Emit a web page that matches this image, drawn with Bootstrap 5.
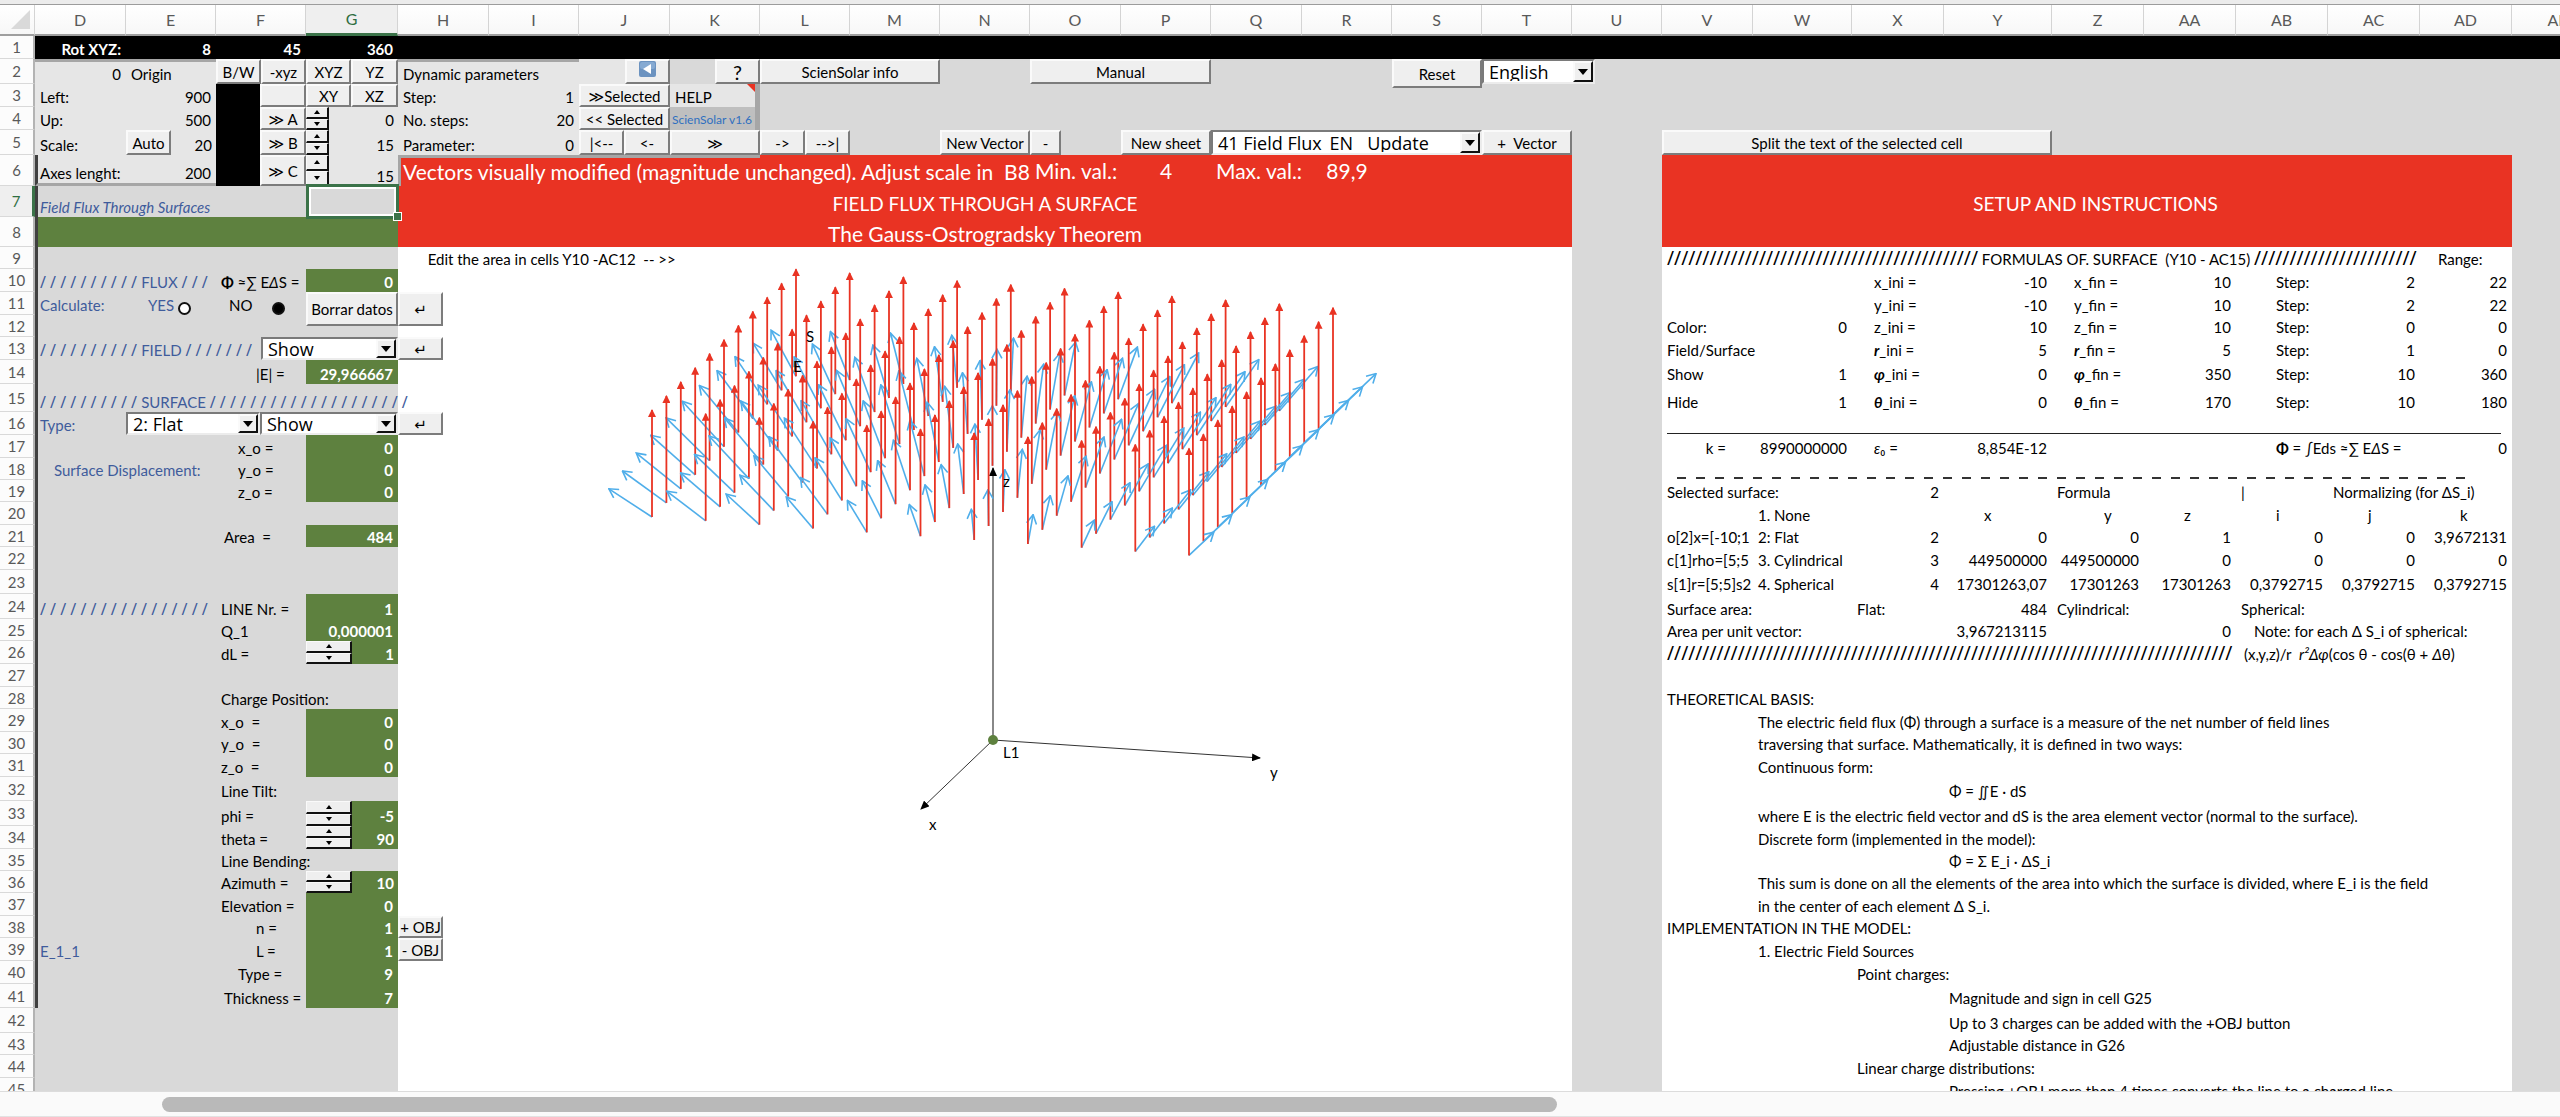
<!DOCTYPE html>
<html lang="en">
<head>
<meta charset="utf-8">
<meta name="viewport" content="width=device-width, initial-scale=1">
<title>ScienSolar - Field Flux</title>
<link href="https://cdn.jsdelivr.net/npm/bootstrap@5.3.0/dist/css/bootstrap.min.css" rel="stylesheet">
<style>
  :root { --red:#e93323; --green:#5e813f; --sel:#3b7349; --ink:#3f5c9c; --grey:#d9d9d9; --panel:#e6e6e6; --shade:#a6a6a6; }
  body { font-family: Lato, "Noto Sans", "DejaVu Sans", sans-serif; font-size: 15px; line-height: 20px; color:#000; background:#fff; }
  .top-strip { height: 5px; background:#ececec; border-bottom:1px solid #9c9c9c; }
  .sheet { table-layout: fixed; width: 2604px; border-collapse: separate; border-spacing: 0; }
  .c35{width:35px}.c90{width:90px}.c91{width:91px}.c92{width:92px}.c93{width:93px}.c99{width:99px}.c108{width:108px}
  .on-grey { background: var(--grey); }
  .on-white { background:#fff; }
  .sheet tr { --h:23px; height: var(--h); }
  .sheet tr.h22{--h:22px}.sheet tr.h24{--h:24px}.sheet tr.h25{--h:25px}.sheet tr.h28{--h:28px}.sheet tr.h30{--h:30px}.sheet tr.h31{--h:31px}
  .sheet td { padding: 0 5px; vertical-align: bottom; white-space: pre; overflow: visible; }
  .sheet thead th, .sheet tbody th { padding:0; font-weight:400; text-align:center; vertical-align: middle; color:#595959; background: linear-gradient(#fff,#f7f7f7); }
  .sheet thead th { border-right:1px solid #d4d4d4; border-bottom:2px solid #9f9f9f; font-size:16px; }
  .sheet tbody th { background:#fcfcfc; border-bottom:1px solid #d9d9d9; border-right:2px solid #b3b3b3; font-size:15px; }
  .sheet thead th.picked { background:#efefef; color:#2f6e42; border-bottom:3px solid var(--sel); }
  .sheet tbody th.picked { color:#2f6e42; border-right:3px solid var(--sel); background:#efefef; }
  .corner-mark { width:19px; height:19px; margin-left:11px; background:#d9d9d9; clip-path: polygon(100% 0,100% 100%,0 100%); }
  .sheet tr.band-grey > td { background: var(--grey); }
  .sheet tr.band-black > td { background:#000; color:#fff; font-weight:700; }
  .sheet tr > td.pane { background: var(--panel); }
  .sheet tr > td.pane-dark { background:#bfbfbf; font-size:12px; color:#2f6fc0; padding:0 2px; }
  .sheet td.shade-top { border-top:3px solid var(--shade); }
  .sheet td.shade-bottom { border-bottom:3px solid var(--shade); }
  .sheet td.shade-right { border-right:5px solid var(--shade); }
  .sheet td.shade-left { border-left:3px solid var(--shade); padding-left:2px; }
  .sheet td.edge { border-left:3px solid #404040; padding-left:2px; }
  .num { text-align:right; }
  .sheet td.grn { background: var(--green); color:#fff; font-weight:700; text-align:right; }
  .sheet td.red { background: var(--red); color:#fff; font-size:21px; line-height:26px; text-align:center; }
  .sheet td.red-mid { vertical-align: middle; }
  .sheet td.red-title { font-size:19px; }
  .sheet td.blu { color: var(--ink); }
  .sheet td.flush { padding:0; vertical-align: top; }
  .sheet td.in8{padding-left:8px}.sheet td.in18{padding-left:18px}.sheet td.in22{padding-left:22px}.sheet td.in40{padding-left:40px}.sheet td.in52{padding-left:52px}
  .sheet td.cut { overflow:hidden; }
  .sheet .btn { --bs-btn-padding-x:0; --bs-btn-padding-y:0; --bs-btn-font-size:15px; --bs-btn-line-height:18px; --bs-btn-border-radius:0; --bs-btn-color:#000; --bs-btn-bg:#efefef; --bs-btn-hover-bg:#f6f6f6; --bs-btn-hover-color:#000;
    height: var(--h); border:2px solid; border-color:#fafafa #7c7c7c #7c7c7c #fafafa; white-space:nowrap; overflow:hidden; flex:none; }
  .sheet td.flush > .btn { display:block; }
  .w-half { width:45px; } .w-spin { width:23px; } .w-wspin { width:46px; } .w-dash { width:31px; } .w-type { width:134px; } .w-lang { width:113px; }
  .ink-black { background:#000; width:44px; height:var(--h); }
  .tall-4 { margin-bottom:-4px; }
  .sheet .btn.tall { height:29px; }
  .sheet .btn.two-rows { height:34px; }
  .combo { height: var(--h); background:#fff; border:2px solid; border-color:#7a7a7a #ececec #ececec #7a7a7a; }
  .combo select { appearance:none; border:0; background:transparent; font-family:"Open Sans","Noto Sans",sans-serif; font-size:18px; line-height:18px; padding:0 0 0 5px; min-width:0; color:#000; outline:0; }
  .combo .drop { width:20px; background:#efefef; border:2px solid; border-color:#fafafa #111 #111 #fafafa; flex:none; }
  .tri-d, .tri-u { display:block; width:0; height:0; border:5px solid transparent; }
  .tri-d { border-top:6px solid #000; border-bottom:0; } .tri-u { border-bottom:6px solid #000; border-top:0; }
  .spin { height: var(--h); }
  .sheet .spin .btn { height:auto; flex:1 1 0; min-height:0; border-color:#fafafa #111 #111 #fafafa; border-width:1px 2px 2px 1px; }
  .spin .tri-d { border-width:4px 3px 0; } .spin .tri-u { border-width:0 3px 4px; }
  .dot { appearance:none; width:13px; height:13px; border:2px solid #111; border-radius:50%; background:#fff; margin:0; }
  .dot:checked { background:#000; }
  .hatch { font-family:"Noto Sans",sans-serif; font-size:16px; }
  .hatch-tight { font-family:"Noto Sans",sans-serif; font-size:19px; }
  .cell-cursor { position:absolute; inset:-2px -1px -2px 0; border:3px solid var(--sel); outline:2px solid #fff; outline-offset:-5px; z-index:2; }
  .cell-cursor::after { content:""; position:absolute; right:-6px; bottom:-5px; width:9px; height:9px; background:var(--sel); border:1px solid #fff; }
  .note-flag { position:absolute; right:0; top:0; border:4px solid transparent; border-top-color:#e93323; border-right-color:#e93323; }
  .rule-line { border-bottom:1px solid #222; margin:0 6px 1px 0; }
  .rule-dash { height:2px; margin:0 36px 1px 10px; background: repeating-linear-gradient(90deg,#333 0 9px,transparent 9px 19px); }
  .plot { position:absolute; left:0; top:0; width:1173px; height:844px; pointer-events:none; overflow:visible; }
  .plot text { font-size:15px; fill:#000; }
  .scroll-track { height:26px; background:#fafafa; border-top:1px solid #dcdcdc; border-bottom:1px solid #e2e2e2; }
  .scroll-thumb { width:54.5%; height:15px; margin-left:6.33%; background:#b9b9b9; border-radius:8px; }
</style>
<script src="https://cdn.jsdelivr.net/npm/bootstrap@5.3.0/dist/js/bootstrap.bundle.min.js"></script>
</head>
<body class="d-flex flex-column vh-100 overflow-hidden">
<div class="top-strip flex-shrink-0"></div>
<main class="flex-grow-1 overflow-hidden">
<table class="sheet">
<colgroup><col class="c35"></colgroup>
<colgroup class="on-grey"><col class="c91"><col class="c90"><col class="c90"><col class="c92"></colgroup>
<colgroup class="on-white"><col class="c91"><col class="c90"><col class="c91"><col class="c90"><col class="c90"><col class="c90"><col class="c90"><col class="c91"><col class="c90"><col class="c91"><col class="c90"><col class="c90"><col class="c90"></colgroup>
<colgroup class="on-grey"><col class="c90"></colgroup>
<colgroup class="on-white"><col class="c91"><col class="c99"><col class="c92"><col class="c108"><col class="c92"><col class="c92"><col class="c92"><col class="c92"><col class="c92"></colgroup>
<colgroup class="on-grey"><col class="c92"></colgroup>
<thead><tr class="h31"><th><div class="corner-mark"></div></th><th>D</th><th>E</th><th>F</th><th class="picked">G</th><th>H</th><th>I</th><th>J</th><th>K</th><th>L</th><th>M</th><th>N</th><th>O</th><th>P</th><th>Q</th><th>R</th><th>S</th><th>T</th><th>U</th><th>V</th><th>W</th><th>X</th><th>Y</th><th>Z</th><th>AA</th><th>AB</th><th>AC</th><th>AD</th><th>AE</th></tr></thead>
<tbody>
<tr class="band-black"><th>1</th><td class="num">Rot XYZ:</td><td class="num">8</td><td class="num">45</td><td class="num">360</td><td colspan="24"></td></tr>
<tr class="h25 band-grey"><th>2</th><td class="pane shade-top num">0</td><td class="pane shade-top">Origin</td>
<td class="flush"><div class="d-flex"><button class="btn w-half">B/W</button><button class="btn w-half">-xyz</button></div></td>
<td class="flush"><div class="d-flex"><button class="btn w-half">XYZ</button><button class="btn flex-grow-1">YZ</button></div></td>
<td class="pane shade-top" colspan="2">Dynamic parameters</td>
<td class="pane flush"><div class="d-flex justify-content-end"><button class="btn w-half d-flex justify-content-center" aria-label="Back"><svg width="17" height="16" viewBox="0 0 17 16"><rect width="17" height="16" rx="2" fill="#6c93c0"/><rect x="1" y="1" width="15" height="7" rx="2" fill="#86aad2"/><path d="M12 3v10L4 8z" fill="#fff"/></svg></button></div></td>
<td class="flush"><div class="d-flex justify-content-end"><button class="btn w-half fs-5">?</button></div></td>
<td class="flush" colspan="2"><button class="btn w-100">ScienSolar info</button></td><td></td>
<td class="flush" colspan="2"><button class="btn w-100">Manual</button></td><td colspan="2"></td>
<td class="flush"><div class="tall-4"><button class="btn tall w-100">Reset</button></div></td>
<td class="flush" colspan="2"><div class="d-flex"><div class="combo w-lang d-flex"><select class="flex-grow-1" aria-label="Language"><option>English</option></select><span class="drop d-flex align-items-center justify-content-center"><i class="tri-d"></i></span></div></div></td>
<td colspan="10"></td></tr>
<tr class="band-grey"><th>3</th><td class="pane">Left:</td><td class="pane num">900</td>
<td class="flush"><div class="d-flex"><span class="ink-black"></span><button class="btn flex-grow-1" aria-label="Blank"></button></div></td>
<td class="flush"><div class="d-flex"><button class="btn w-half">XY</button><button class="btn flex-grow-1">XZ</button></div></td>
<td class="pane">Step:</td><td class="pane num">1</td><td class="flush"><button class="btn w-100">≫Selected</button></td>
<td class="pane shade-right position-relative">HELP<span class="note-flag"></span></td><td colspan="20"></td></tr>
<tr class="band-grey"><th>4</th><td class="pane">Up:</td><td class="pane num">500</td>
<td class="flush"><div class="d-flex"><span class="ink-black"></span><button class="btn flex-grow-1">≫ A</button></div></td>
<td class="pane flush"><div class="d-flex justify-content-between align-items-end pe-1"><div class="spin w-spin d-flex flex-column"><button class="btn d-flex align-items-center justify-content-center" aria-label="A up"><i class="tri-u"></i></button><button class="btn d-flex align-items-center justify-content-center" aria-label="A down"><i class="tri-d"></i></button></div><span>0</span></div></td>
<td class="pane">No. steps:</td><td class="pane num">20</td><td class="flush"><button class="btn w-100">&lt;&lt; Selected</button></td>
<td class="pane-dark shade-right">ScienSolar v1.6</td><td colspan="20"></td></tr>
<tr class="h25 band-grey"><th>5</th><td class="pane">Scale:</td>
<td class="pane flush"><div class="d-flex justify-content-between align-items-end pe-1"><button class="btn w-half">Auto</button><span>20</span></div></td>
<td class="flush"><div class="d-flex"><span class="ink-black"></span><button class="btn flex-grow-1">≫ B</button></div></td>
<td class="pane flush"><div class="d-flex justify-content-between align-items-end pe-1"><div class="spin w-spin d-flex flex-column"><button class="btn d-flex align-items-center justify-content-center" aria-label="B up"><i class="tri-u"></i></button><button class="btn d-flex align-items-center justify-content-center" aria-label="B down"><i class="tri-d"></i></button></div><span>15</span></div></td>
<td class="pane">Parameter:</td><td class="pane num">0</td>
<td class="flush"><div class="d-flex"><button class="btn w-half">|&lt;--</button><button class="btn flex-grow-1">&lt;-</button></div></td>
<td class="flush"><button class="btn w-100">≫</button></td>
<td class="flush"><div class="d-flex"><button class="btn w-half">-&gt;</button><button class="btn flex-grow-1">--&gt;|</button></div></td><td></td>
<td class="flush"><button class="btn w-100">New Vector</button></td><td class="flush"><button class="btn w-dash">-</button></td>
<td class="flush"><button class="btn w-100">New sheet</button></td>
<td class="flush" colspan="3"><div class="combo d-flex"><select class="flex-grow-1" aria-label="Sheet"><option>41 Field Flux_EN &nbsp; Update</option></select><span class="drop d-flex align-items-center justify-content-center"><i class="tri-d"></i></span></div></td>
<td class="flush"><button class="btn w-100">+ &nbsp;Vector</button></td><td></td>
<td class="flush" colspan="4"><button class="btn w-100">Split the text of the selected cell</button></td><td colspan="6"></td></tr>
<tr class="h31"><th>6</th><td class="pane edge shade-bottom">Axes lenght:</td><td class="pane num shade-bottom">200</td>
<td class="flush"><div class="d-flex"><span class="ink-black"></span><button class="btn flex-grow-1">≫ C</button></div></td>
<td class="pane flush"><div class="d-flex justify-content-between align-items-end pe-1"><div class="spin w-spin d-flex flex-column"><button class="btn d-flex align-items-center justify-content-center" aria-label="C up"><i class="tri-u"></i></button><button class="btn d-flex align-items-center justify-content-center" aria-label="C down"><i class="tri-d"></i></button></div><span>15</span></div></td>
<td class="red red-mid text-start shade-top shade-left" colspan="4">Vectors visually modified (magnitude unchanged). Adjust scale in  B8</td><td class="red" colspan="3"></td><td class="red red-mid text-start">Min. val.:</td><td class="red red-mid">4</td><td class="red red-mid text-start">Max. val.:</td><td class="red red-mid">89,9</td><td class="red" colspan="2"></td>
<td></td><td class="red" colspan="9"></td><td></td></tr>
<tr class="h31"><th class="picked">7</th><td class="edge blu fst-italic" colspan="3">Field Flux Through Surfaces</td><td class="position-relative"><span class="cell-cursor"></span></td>
<td class="red red-title" colspan="13">FIELD FLUX THROUGH A SURFACE</td><td></td><td class="red red-title in22" colspan="9">SETUP AND INSTRUCTIONS</td><td></td></tr>
<tr class="h30"><th>8</th><td class="edge grn" colspan="4"></td><td class="red" colspan="13">The Gauss-Ostrogradsky Theorem</td><td></td><td class="red" colspan="9"></td><td></td></tr>
<tr class="h22"><th>9</th><td class="edge" colspan="4"></td>
<td class="position-relative in22" colspan="13">  Edit the area in cells Y10 -AC12  -- &gt;&gt;<svg class="plot" viewBox="0 0 1173 844" role="img" aria-label="Field vectors over the surface">
<defs>
<marker id="headRed" viewBox="0 0 8 8" markerWidth="8" markerHeight="8" refX="7" refY="4" orient="auto" markerUnits="userSpaceOnUse"><path d="M0 0L8 4L0 8z" fill="#e93323"/></marker>
<marker id="headBlack" viewBox="0 0 9 8" markerWidth="9" markerHeight="8" refX="8" refY="4" orient="auto" markerUnits="userSpaceOnUse"><path d="M0 0L9 4L0 8z" fill="#000"/></marker>
<marker id="headBlue" viewBox="-1 -1 11 12" markerWidth="11" markerHeight="12" refX="9" refY="5" orient="auto" markerUnits="userSpaceOnUse"><path d="M0 0L9 5L0 10" fill="none" stroke="#4faeea" stroke-width="1.6"/></marker>
</defs>
<g stroke="#333" stroke-width="1" fill="none"><path d="M595 493V221" stroke="#888" stroke-width="2" marker-end="url(#headBlack)"/><path d="M595 493L862 511" marker-end="url(#headBlack)"/><path d="M595 493L523 562" marker-end="url(#headBlack)"/></g>
<g id="vectors"></g>
<circle cx="595" cy="493" r="5" fill="#5e813f"/>
<text x="408" y="95">S</text><text x="395" y="125">E</text><text x="605" y="240">z</text><text x="605" y="511">L1</text><text x="872" y="531">y</text><text x="531" y="583">x</text>
</svg></td><td></td>
<td colspan="8" class="cut"><span class="hatch-tight">////////////////////////////////////////////</span> FORMULAS OF. SURFACE  (Y10 - AC15) <span class="hatch-tight">///////////////////////</span></td><td class="in18">Range:</td><td></td></tr>
<tr><th>10</th><td class="edge blu cut" colspan="2"><span class="hatch">/ / / / / / / / / / </span>FLUX <span class="hatch">/ / /</span></td><td><b>Φ</b> ≈∑ E<i>Δ</i>S =</td><td class="grn">0</td><td colspan="13"></td><td></td>
<td></td><td></td><td class="in22">x_ini =</td><td class="num">-10</td><td class="in22">x_fin =</td><td class="num">10</td><td class="in40">Step:</td><td class="num">2</td><td class="num">22</td><td></td></tr>
<tr><th>11</th><td class="edge blu">Calculate:</td><td class="blu in22"><div class="d-flex align-items-end"><label for="calcYes">YES</label><input class="dot ms-1" type="radio" name="calc" id="calcYes"></div></td><td><div class="d-flex align-items-end ps-2"><label for="calcNo">NO</label><input class="dot ms-auto me-3" type="radio" name="calc" id="calcNo" checked></div></td>
<td class="flush" rowspan="2"><button class="btn two-rows w-100">Borrar datos</button></td><td class="flush" rowspan="2"><button class="btn two-rows w-half">↵</button></td><td colspan="12"></td><td></td>
<td></td><td></td><td class="in22">y_ini =</td><td class="num">-10</td><td class="in22">y_fin =</td><td class="num">10</td><td class="in40">Step:</td><td class="num">2</td><td class="num">22</td><td></td></tr>
<tr class="h22"><th>12</th><td class="edge" colspan="3"></td><td colspan="12"></td><td></td>
<td>Color:</td><td class="num">0</td><td class="in22">z_ini =</td><td class="num">10</td><td class="in22">z_fin =</td><td class="num">10</td><td class="in40">Step:</td><td class="num">0</td><td class="num">0</td><td></td></tr>
<tr><th>13</th><td class="edge blu" colspan="2"><span class="hatch">/ / / / / / / / / / </span>FIELD <span class="hatch">/ / / / / / /</span></td>
<td class="flush" colspan="2"><div class="d-flex"><span class="w-half"></span><div class="combo d-flex flex-grow-1"><select class="flex-grow-1" aria-label="Field"><option>Show</option></select><span class="drop d-flex align-items-center justify-content-center"><i class="tri-d"></i></span></div></div></td>
<td class="flush"><button class="btn w-half">↵</button></td><td colspan="12"></td><td></td>
<td>Field/Surface</td><td></td><td class="in22"><b><i>r</i></b>_ini =</td><td class="num">5</td><td class="in22"><b><i>r</i></b>_fin =</td><td class="num">5</td><td class="in40">Step:</td><td class="num">1</td><td class="num">0</td><td></td></tr>
<tr class="h24"><th>14</th><td class="edge" colspan="2"></td><td class="in40">|E| =</td><td class="grn">29,966667</td><td colspan="13"></td><td></td>
<td>Show</td><td class="num">1</td><td class="in22"><b><i>φ</i></b>_ini =</td><td class="num">0</td><td class="in22"><b><i>φ</i></b>_fin =</td><td class="num">350</td><td class="in40">Step:</td><td class="num">10</td><td class="num">360</td><td></td></tr>
<tr class="h28"><th>15</th><td class="edge blu" colspan="4"><span class="hatch">/ / / / / / / / / / </span>SURFACE <span class="hatch">/ / / / / / / / / / / / / / / / / / / /</span></td><td colspan="13"></td><td></td>
<td>Hide</td><td class="num">1</td><td class="in22"><b><i>θ</i></b>_ini =</td><td class="num">0</td><td class="in22"><b><i>θ</i></b>_fin =</td><td class="num">170</td><td class="in40">Step:</td><td class="num">10</td><td class="num">180</td><td></td></tr>
<tr><th>16</th><td class="edge blu">Type:</td><td class="flush" colspan="3"><div class="d-flex"><div class="combo w-type d-flex"><select class="flex-grow-1" aria-label="Surface type"><option>2: Flat</option></select><span class="drop d-flex align-items-center justify-content-center"><i class="tri-d"></i></span></div><div class="combo d-flex flex-grow-1"><select class="flex-grow-1" aria-label="Surface visibility"><option>Show</option></select><span class="drop d-flex align-items-center justify-content-center"><i class="tri-d"></i></span></div></div></td>
<td class="flush"><button class="btn w-half">↵</button></td><td colspan="12"></td><td></td><td colspan="9"><div class="rule-line"></div></td><td></td></tr>
<tr><th>17</th><td class="edge" colspan="2"></td><td class="in22">x_o =</td><td class="grn">0</td><td colspan="13"></td><td></td>
<td class="in40"> k =</td><td class="num">8990000000</td><td class="in22"><i>ε</i>₀ =</td><td class="num">8,854E-12</td><td></td><td></td><td class="in40" colspan="2"><b>Φ</b> = ∫Eds ≈∑ E<i>Δ</i>S =</td><td class="num">0</td><td></td></tr>
<tr class="h22"><th>18</th><td class="edge blu ps-3" colspan="2">Surface Displacement:</td><td class="in22">y_o =</td><td class="grn">0</td><td colspan="13"></td><td></td><td colspan="9"><div class="rule-dash"></div></td><td></td></tr>
<tr class="h22"><th>19</th><td class="edge" colspan="2"></td><td class="in22">z_o =</td><td class="grn">0</td><td colspan="13"></td><td></td>
<td colspan="2">Selected surface:</td><td class="num">2</td><td></td><td>Formula</td><td></td><td>|</td><td colspan="2">Normalizing (for ΔS_i)</td><td></td></tr>
<tr><th>20</th><td class="edge" colspan="4"></td><td colspan="13"></td><td></td>
<td></td><td colspan="2">1. None</td><td class="in40">x</td><td class="in52">y</td><td class="in40">z</td><td class="in40">i</td><td class="in40">j</td><td class="in40">k</td><td></td></tr>
<tr class="h22"><th>21</th><td class="edge" colspan="2"></td><td class="in8">Area  =</td><td class="grn">484</td><td colspan="13"></td><td></td>
<td>o[2]x=[-10;1</td><td>2: Flat</td><td class="num">2</td><td class="num">0</td><td class="num">0</td><td class="num">1</td><td class="num">0</td><td class="num">0</td><td class="num">3,9672131</td><td></td></tr>
<tr><th>22</th><td class="edge" colspan="4"></td><td colspan="13"></td><td></td>
<td>c[1]rho=[5;5</td><td>3. Cylindrical</td><td class="num">3</td><td class="num">449500000</td><td class="num">449500000</td><td class="num">0</td><td class="num">0</td><td class="num">0</td><td class="num">0</td><td></td></tr>
<tr class="h24"><th>23</th><td class="edge" colspan="4"></td><td colspan="13"></td><td></td>
<td>s[1]r=[5;5]s2</td><td>4. Spherical</td><td class="num">4</td><td class="num">17301263,07</td><td class="num">17301263</td><td class="num">17301263</td><td class="num">0,3792715</td><td class="num">0,3792715</td><td class="num">0,3792715</td><td></td></tr>
<tr class="h25"><th>24</th><td class="edge blu" colspan="2"><span class="hatch">/ / / / / / / / / / / / / / / / /</span></td><td>LINE Nr. =</td><td class="grn">1</td><td colspan="13"></td><td></td>
<td colspan="2">Surface area:</td><td>Flat:</td><td class="num">484</td><td>Cylindrical:</td><td></td><td colspan="3">Spherical:</td><td></td></tr>
<tr class="h22"><th>25</th><td class="edge" colspan="2"></td><td>Q_1</td><td class="grn">0,000001</td><td colspan="13"></td><td></td>
<td colspan="3">Area per unit vector:</td><td class="num">3,967213115</td><td></td><td class="num">0</td><td class="in18" colspan="3">Note: for each Δ S_i of spherical:</td><td></td></tr>
<tr><th>26</th><td class="edge" colspan="2"></td><td>dL =</td><td class="grn flush"><div class="d-flex justify-content-between align-items-end pe-1"><div class="spin w-wspin d-flex flex-column"><button class="btn d-flex align-items-center justify-content-center" aria-label="dL up"><i class="tri-u"></i></button><button class="btn d-flex align-items-center justify-content-center" aria-label="dL down"><i class="tri-d"></i></button></div><span>1</span></div></td><td colspan="13"></td><td></td>
<td colspan="6"><span class="hatch-tight">////////////////////////////////////////////////////////////////////////////////</span></td><td class="in8" colspan="3">(x,y,z)/r  <i>r²Δφ</i>(cos θ - cos(θ + <i>Δ</i>θ)</td><td></td></tr>
<tr><th>27</th><td class="edge" colspan="4"></td><td colspan="13"></td><td></td><td colspan="9"></td><td></td></tr>
<tr class="h22"><th>28</th><td class="edge" colspan="2"></td><td colspan="2">Charge Position:</td><td colspan="13"></td><td></td><td colspan="9">THEORETICAL BASIS:</td><td></td></tr>
<tr><th>29</th><td class="edge" colspan="2"></td><td>x_o  =</td><td class="grn">0</td><td colspan="13"></td><td></td><td></td><td colspan="8">The electric field flux (Φ) through a surface is a measure of the net number of field lines</td><td></td></tr>
<tr class="h22"><th>30</th><td class="edge" colspan="2"></td><td>y_o  =</td><td class="grn">0</td><td colspan="13"></td><td></td><td></td><td colspan="8">traversing that surface. Mathematically, it is defined in two ways:</td><td></td></tr>
<tr><th>31</th><td class="edge" colspan="2"></td><td>z_o  =</td><td class="grn">0</td><td colspan="13"></td><td></td><td></td><td colspan="8">Continuous form:</td><td></td></tr>
<tr class="h24"><th>32</th><td class="edge" colspan="2"></td><td colspan="2">Line Tilt:</td><td colspan="13"></td><td></td><td colspan="3"></td><td colspan="6">Φ = ∬E · dS</td><td></td></tr>
<tr class="h25"><th>33</th><td class="edge" colspan="2"></td><td>phi =</td><td class="grn flush"><div class="d-flex justify-content-between align-items-end pe-1"><div class="spin w-wspin d-flex flex-column"><button class="btn d-flex align-items-center justify-content-center" aria-label="phi up"><i class="tri-u"></i></button><button class="btn d-flex align-items-center justify-content-center" aria-label="phi down"><i class="tri-d"></i></button></div><span>-5</span></div></td><td colspan="13"></td><td></td><td></td><td colspan="8">where E is the electric field vector and dS is the area element vector (normal to the surface).</td><td></td></tr>
<tr><th>34</th><td class="edge" colspan="2"></td><td>theta =</td><td class="grn flush"><div class="d-flex justify-content-between align-items-end pe-1"><div class="spin w-wspin d-flex flex-column"><button class="btn d-flex align-items-center justify-content-center" aria-label="theta up"><i class="tri-u"></i></button><button class="btn d-flex align-items-center justify-content-center" aria-label="theta down"><i class="tri-d"></i></button></div><span>90</span></div></td><td colspan="13"></td><td></td><td></td><td colspan="8">Discrete form (implemented in the model):</td><td></td></tr>
<tr class="h22"><th>35</th><td class="edge" colspan="2"></td><td colspan="2">Line Bending:</td><td colspan="13"></td><td></td><td colspan="3"></td><td colspan="6">Φ = Σ E_i · ΔS_i</td><td></td></tr>
<tr class="h22"><th>36</th><td class="edge" colspan="2"></td><td>Azimuth =</td><td class="grn flush"><div class="d-flex justify-content-between align-items-end pe-1"><div class="spin w-wspin d-flex flex-column"><button class="btn d-flex align-items-center justify-content-center" aria-label="Azimuth up"><i class="tri-u"></i></button><button class="btn d-flex align-items-center justify-content-center" aria-label="Azimuth down"><i class="tri-d"></i></button></div><span>10</span></div></td><td colspan="13"></td><td></td><td></td><td colspan="8">This sum is done on all the elements of the area into which the surface is divided, where E_i is the field</td><td></td></tr>
<tr><th>37</th><td class="edge" colspan="2"></td><td>Elevation =</td><td class="grn">0</td><td colspan="13"></td><td></td><td></td><td colspan="8">in the center of each element Δ S_i.</td><td></td></tr>
<tr class="h22"><th>38</th><td class="edge" colspan="2"></td><td class="in40">n =</td><td class="grn">1</td><td class="flush"><button class="btn w-half">+ OBJ</button></td><td colspan="12"></td><td></td><td colspan="9">IMPLEMENTATION IN THE MODEL:</td><td></td></tr>
<tr><th>39</th><td class="edge blu" colspan="2">E_1_1</td><td class="in40">L =</td><td class="grn">1</td><td class="flush"><button class="btn w-half">- OBJ</button></td><td colspan="12"></td><td></td><td></td><td colspan="8">1. Electric Field Sources</td><td></td></tr>
<tr><th>40</th><td class="edge" colspan="2"></td><td class="in22">Type =</td><td class="grn">9</td><td colspan="13"></td><td></td><td colspan="2"></td><td colspan="7">Point charges:</td><td></td></tr>
<tr class="h24"><th>41</th><td class="edge" colspan="2"></td><td class="in8">Thickness =</td><td class="grn">7</td><td colspan="13"></td><td></td><td colspan="3"></td><td colspan="6">Magnitude and sign in cell G25</td><td></td></tr>
<tr class="h25"><th>42</th><td colspan="4"></td><td colspan="13"></td><td></td><td colspan="3"></td><td colspan="6">Up to 3 charges can be added with the +OBJ button</td><td></td></tr>
<tr class="h22"><th>43</th><td colspan="4"></td><td colspan="13"></td><td></td><td colspan="3"></td><td colspan="6">Adjustable distance in G26</td><td></td></tr>
<tr><th>44</th><td colspan="4"></td><td colspan="13"></td><td></td><td colspan="2"></td><td colspan="7">Linear charge distributions:</td><td></td></tr>
<tr><th>45</th><td colspan="4"></td><td colspan="13"></td><td></td><td colspan="3"></td><td colspan="6">Pressing +OBJ more than 4 times converts the line to a charged line</td><td></td></tr>
</tbody>
</table>
</main>
<footer class="scroll-track flex-shrink-0 d-flex align-items-center"><div class="scroll-thumb"></div></footer>
<script>
// Unit field of a charge at the origin, sampled on the plane z = 10 (x, y from -10 to 10, step 2).
const origin = {x: 595, y: 493}, start = {x: 254, y: 270};
const layer = document.getElementById('vectors');
const arrow = (x1, y1, x2, y2, color, head, w) => {
  const p = document.createElementNS('http://www.w3.org/2000/svg', 'path');
  p.setAttribute('d', `M${x1.toFixed(1)} ${y1.toFixed(1)}L${x2.toFixed(1)} ${y2.toFixed(1)}`);
  p.setAttribute('stroke', color); p.setAttribute('stroke-width', w); p.setAttribute('marker-end', `url(#${head})`);
  layer.append(p);
};
for (let i = 0; i <= 10; i++) for (let j = 10; j >= 0; j--) {
  const bx = start.x + 53.7 * i + 14.4 * j, by = start.y + 3.84 * i - 14.07 * j;
  const k = 2.19 / Math.hypot(-10 + 2 * i, -10 + 2 * j, 10);
  arrow(bx, by, bx + (bx - origin.x) * k, by + (by - origin.y) * k, '#4faeea', 'headBlue', 1.6);
  arrow(bx, by, bx, by - 107, '#e93323', 'headRed', 1.8);
}
</script>
</body>
</html>
